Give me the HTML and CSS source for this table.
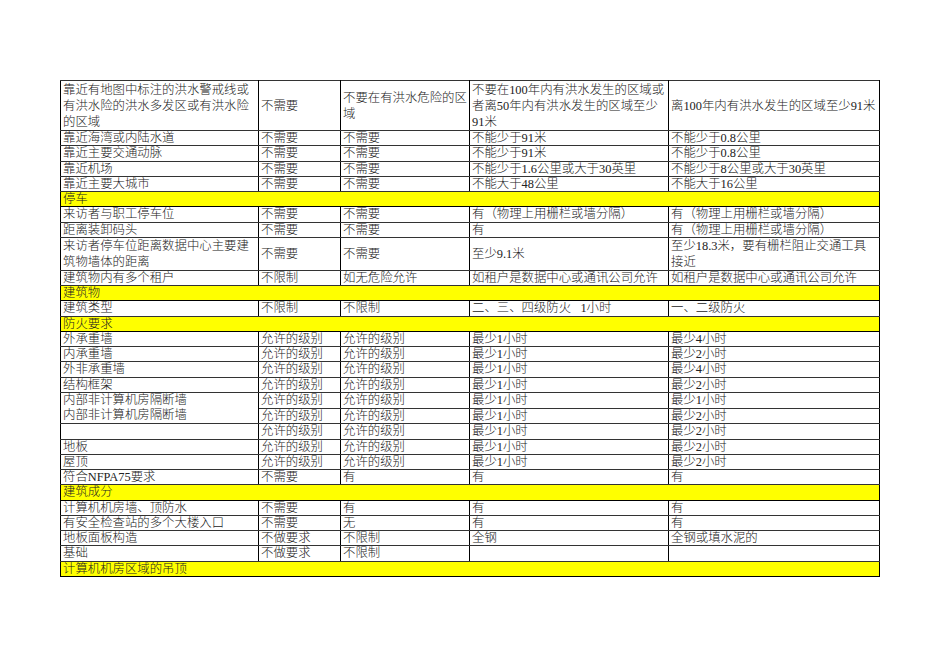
FILE: index.html
```html
<!DOCTYPE html>
<html lang="zh">
<head>
<meta charset="utf-8">
<link rel="stylesheet" href="styles.css">
</head>
<body>
<table class="sheet">
<colgroup><col class="c1"><col class="c2"><col class="c3"><col class="c4"><col class="c5"></colgroup>
<tr class="r3"><td>靠近有地图中标注的洪水警戒线或有洪水险的洪水多发区或有洪水险的区域</td><td>不需要</td><td>不要在有洪水危险的区域</td><td>不要在100年内有洪水发生的区域或者离50年内有洪水发生的区域至少91米</td><td>离100年内有洪水发生的区域至少91米</td></tr>
<tr><td>靠近海湾或内陆水道</td><td>不需要</td><td>不需要</td><td>不能少于91米</td><td>不能少于0.8公里</td></tr>
<tr><td>靠近主要交通动脉</td><td>不需要</td><td>不需要</td><td>不能少于91米</td><td>不能少于0.8公里</td></tr>
<tr><td>靠近机场</td><td>不需要</td><td>不需要</td><td>不能少于1.6公里或大于30英里</td><td>不能少于8公里或大于30英里</td></tr>
<tr><td>靠近主要大城市</td><td>不需要</td><td>不需要</td><td>不能大于48公里</td><td>不能大于16公里</td></tr>
<tr class="sec"><td colspan="5">停车</td></tr>
<tr><td>来访者与职工停车位</td><td>不需要</td><td>不需要</td><td>有（物理上用栅栏或墙分隔）</td><td>有（物理上用栅栏或墙分隔）</td></tr>
<tr><td>距离装卸码头</td><td>不需要</td><td>不需要</td><td>有</td><td>有（物理上用栅栏或墙分隔）</td></tr>
<tr class="r2"><td>来访者停车位距离数据中心主要建筑物墙体的距离</td><td>不需要</td><td>不需要</td><td>至少9.1米</td><td>至少18.3米，要有栅栏阻止交通工具接近</td></tr>
<tr><td>建筑物内有多个租户</td><td>不限制</td><td>如无危险允许</td><td>如租户是数据中心或通讯公司允许</td><td>如租户是数据中心或通讯公司允许</td></tr>
<tr class="sec"><td colspan="5">建筑物</td></tr>
<tr><td>建筑类型</td><td>不限制</td><td>不限制</td><td>二、三、四级防火&nbsp;&nbsp;&nbsp;1小时</td><td>一、二级防火</td></tr>
<tr class="sec"><td colspan="5">防火要求</td></tr>
<tr><td>外承重墙</td><td>允许的级别</td><td>允许的级别</td><td>最少1小时</td><td>最少4小时</td></tr>
<tr><td>内承重墙</td><td>允许的级别</td><td>允许的级别</td><td>最少1小时</td><td>最少2小时</td></tr>
<tr><td>外非承重墙</td><td>允许的级别</td><td>允许的级别</td><td>最少1小时</td><td>最少4小时</td></tr>
<tr><td>结构框架</td><td>允许的级别</td><td>允许的级别</td><td>最少1小时</td><td>最少2小时</td></tr>
<tr><td rowspan="2" class="top">内部非计算机房隔断墙<br>内部非计算机房隔断墙</td><td>允许的级别</td><td>允许的级别</td><td>最少1小时</td><td>最少1小时</td></tr>
<tr><td>允许的级别</td><td>允许的级别</td><td>最少1小时</td><td>最少2小时</td></tr>
<tr><td></td><td>允许的级别</td><td>允许的级别</td><td>最少1小时</td><td>最少2小时</td></tr>
<tr><td>地板</td><td>允许的级别</td><td>允许的级别</td><td>最少1小时</td><td>最少2小时</td></tr>
<tr><td>屋顶</td><td>允许的级别</td><td>允许的级别</td><td>最少1小时</td><td>最少2小时</td></tr>
<tr><td>符合NFPA75要求</td><td>不需要</td><td>有</td><td>有</td><td>有</td></tr>
<tr class="sec"><td colspan="5">建筑成分</td></tr>
<tr><td>计算机机房墙、顶防水</td><td>不需要</td><td>有</td><td>有</td><td>有</td></tr>
<tr><td>有安全检查站的多个大楼入口</td><td>不需要</td><td>无</td><td>有</td><td>有</td></tr>
<tr><td>地板面板构造</td><td>不做要求</td><td>不限制</td><td>全钢</td><td>全钢或填水泥的</td></tr>
<tr><td>基础</td><td>不做要求</td><td>不限制</td><td></td><td></td></tr>
<tr class="sec"><td colspan="5">计算机机房区域的吊顶</td></tr>
</table>
</body>
</html>
```
FILE: styles.css
```css
html, body {
  margin: 0;
  padding: 0;
  background: #ffffff;
}
body {
  padding: 80px 0 0 60px;
  font-family: "Liberation Serif", "Noto Sans CJK SC", serif;
  font-weight: 300;
  color: #222222;
}
.sheet {
  border-collapse: collapse;
  table-layout: fixed;
  width: 820px;
  font-size: 12.4px;
}
.c1 { width: 198px; }
.c2 { width: 82px; }
.c3 { width: 129px; }
.c4 { width: 199px; }
.c5 { width: 211px; }
.sheet td {
  border-top: 1px solid #333;
  border-bottom: 1px solid #333;
  border-left: 1px solid #000;
  border-right: 1px solid #000;
  padding: 0 1px 0 2px;
  height: 14.25px;
  line-height: 14.25px;
  vertical-align: middle;
  white-space: nowrap;
  overflow: hidden;
}
.sheet td:nth-child(2) { border-left-color: #888; }
.sheet td:nth-child(5) { border-left-color: #888; }
.sheet tr > td:first-child { border-left-color: #000; }
.sheet tr > td:last-child { border-right-color: #000; }
.r3 td, .r2 td {
  white-space: normal;
  line-height: 16px;
}
.r3 td { height: 49px; }
.r2 td { height: 30px; }
.sheet td.top {
  vertical-align: top;
  line-height: 15.25px;
  white-space: nowrap;
}
.sec td {
  background: #ffff00;
  border-color: #000;
}
```
